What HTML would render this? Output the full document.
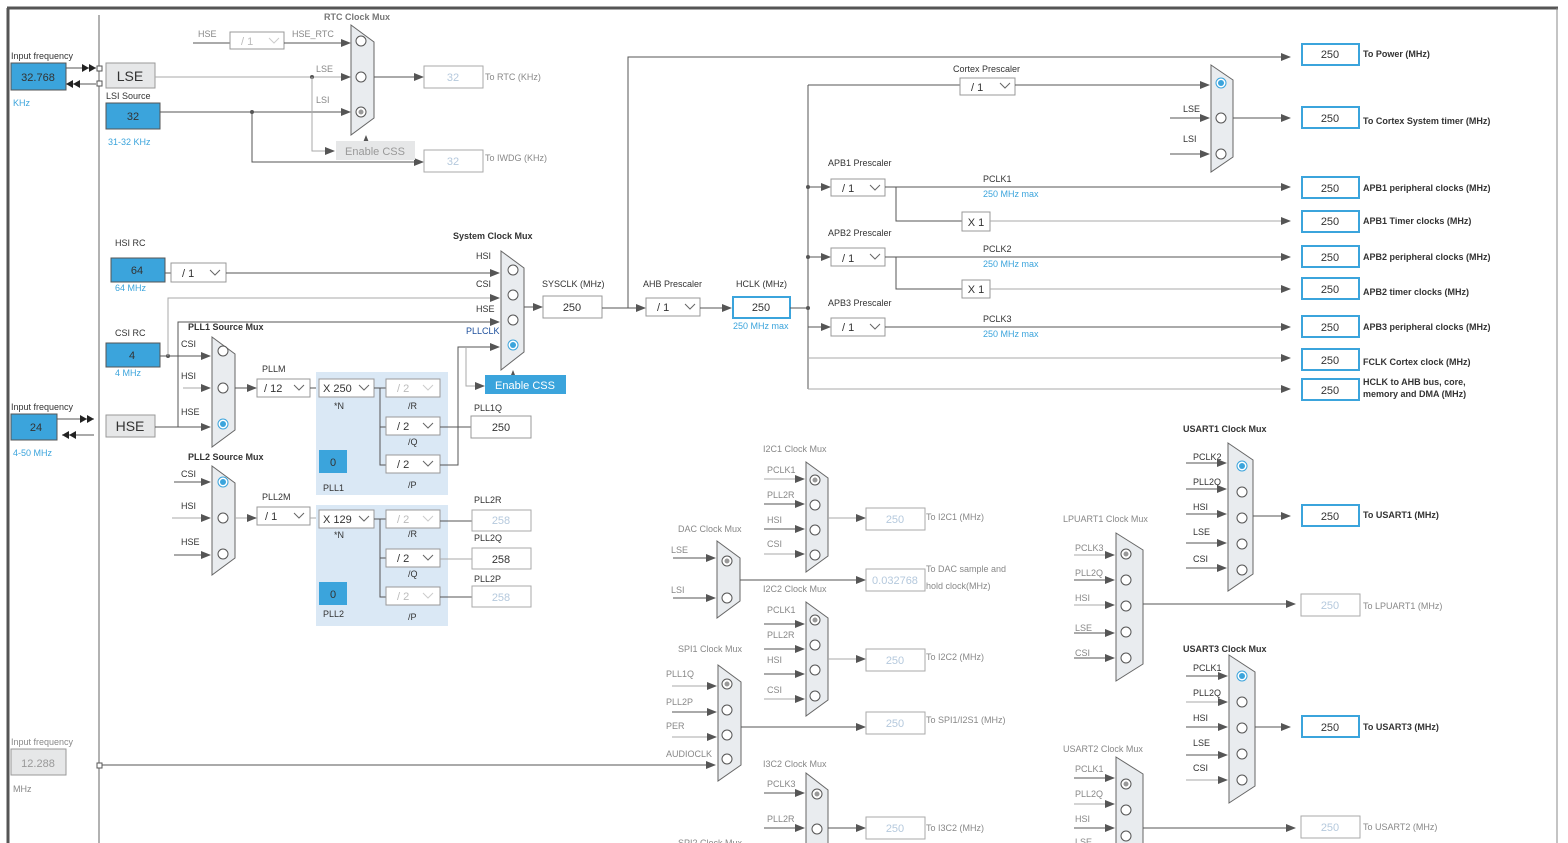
<!DOCTYPE html>
<html><head><meta charset="utf-8"><style>
html,body{margin:0;padding:0;background:#fff;width:1568px;height:843px;overflow:hidden}
svg{display:block;font-family:"Liberation Sans",Arial,sans-serif}
.l{stroke:#555;stroke-width:1;fill:none}
.g{stroke:#aaa;stroke-width:1;fill:none}
.m{fill:#e9ecef;stroke:#666;stroke-width:1}
.c{fill:#fff;stroke:#555;stroke-width:1}
.t{font-size:9px;fill:#333}
.tg{font-size:9px;fill:#888}
.tb{font-size:9px;fill:#333;font-weight:bold}
.tbg{font-size:9px;fill:#777;font-weight:bold}
.bl{font-size:9px;fill:#3ba4dc}
.dd{fill:#fff;stroke:#999}
.dt{font-size:11px;fill:#333}
.dtg{font-size:11px;fill:#bbb}
.ob{fill:#fff;stroke:#3ba4dc;stroke-width:2}
.og{fill:#fff;stroke:#aaa;stroke-width:1}
.ot{font-size:11px;fill:#333;text-anchor:middle}
.otg{font-size:11px;fill:#b5c9dd;text-anchor:middle}
.bx{fill:#3ba4dc;stroke:#555}
.ch{stroke:#666;fill:none}
.chg{stroke:#ccc;fill:none}
.rl{font-size:9px;fill:#333;font-weight:bold}
</style></head><body>
<svg width="1568" height="843" viewBox="0 0 1568 843">
<defs>
<marker id="a" markerWidth="10" markerHeight="8" refX="9" refY="4" orient="auto" markerUnits="userSpaceOnUse"><path d="M0,0L10,4L0,8z" fill="#555"/></marker>
</defs>
<line x1="7" y1="8" x2="1558" y2="8" stroke="#555" stroke-width="3"/>
<line x1="8" y1="8" x2="8" y2="843" stroke="#555" stroke-width="3"/>
<line x1="1557" y1="8" x2="1557" y2="843" stroke="#888" stroke-width="1"/>
<line x1="99" y1="15" x2="99" y2="843" stroke="#666"/>

<text x="11" y="59" class="t">Input frequency</text>
<rect x="11" y="63" width="55" height="27" class="bx" stroke="none"/>
<text x="38" y="81" class="ot">32.768</text>
<text x="13" y="106" class="bl">KHz</text>
<line x1="66" y1="68" x2="96" y2="68" class="l"/><path d="M82,64L89,68L82,72zM89,64L96,68L89,72z" fill="#222"/>
<line x1="96" y1="84" x2="66" y2="84" class="l"/><path d="M73,80L66,84L73,88zM80,80L73,84L80,88z" fill="#222"/>
<rect x="97" y="66" width="5" height="5" fill="#fff" stroke="#555"/>
<rect x="97" y="81" width="5" height="5" fill="#fff" stroke="#555"/>
<rect x="106" y="63" width="49" height="25" fill="#e6e7e8" stroke="#999"/>
<text x="130" y="81" font-size="14" fill="#333" text-anchor="middle">LSE</text>
<text x="106" y="99" class="t">LSI Source</text>
<rect x="106" y="103" width="54" height="26" class="bx"/>
<text x="133" y="120" class="ot">32</text>
<text x="108" y="145" class="bl">31-32 KHz</text>

<text x="324" y="20" class="tbg">RTC Clock Mux</text>
<text x="198" y="37" class="tg">HSE</text>
<line x1="193" y1="43" x2="230" y2="43" class="l"/>
<rect x="230" y="32" width="54" height="17" class="dd"/><text x="241" y="45" class="dtg">/ 1</text><polyline points="269,38 274,43 279,38" class="chg"/>
<text x="292" y="37" class="tg">HSE_RTC</text>
<line x1="284" y1="43" x2="350" y2="43" class="l" marker-end="url(#a)"/>
<text x="316" y="72" class="tg">LSE</text>
<text x="316" y="103" class="tg">LSI</text>
<line x1="155" y1="77" x2="350" y2="77" class="g" marker-end="url(#a)"/>
<circle cx="312" cy="77" r="2" fill="#555"/>
<line x1="160" y1="112" x2="350" y2="112" class="l" marker-end="url(#a)"/>
<circle cx="252" cy="112" r="2" fill="#555"/>
<polyline points="312,77 312,151 334,151" class="g" marker-end="url(#a)"/>
<polyline points="252,112 252,162 423,162" class="l" marker-end="url(#a)"/>
<polygon points="351,25 374,42 374,118 351,135" class="m"/>
<circle cx="361" cy="41" r="5" class="c"/><circle cx="361" cy="77" r="5" class="c"/><circle cx="361" cy="112" r="5" class="c"/><circle cx="361" cy="112" r="2.5" fill="#999"/>
<line x1="366" y1="141" x2="366" y2="136" class="l" marker-end="url(#a)"/>
<rect x="336" y="141" width="79" height="19" fill="#e6e7e8"/>
<text x="375" y="155" font-size="11" fill="#999" text-anchor="middle">Enable CSS</text>
<line x1="374" y1="77" x2="423" y2="77" class="l" marker-end="url(#a)"/>
<rect x="424" y="66" width="59" height="22" class="og"/><text x="453" y="81" class="otg">32</text>
<text x="485" y="80" class="tg">To RTC (KHz)</text>
<rect x="424" y="150" width="59" height="22" class="og"/><text x="453" y="165" class="otg">32</text>
<text x="485" y="161" class="tg">To IWDG (KHz)</text>

<text x="115" y="246" class="t">HSI RC</text>
<rect x="111" y="258" width="54" height="24" class="bx"/><text x="137" y="274" class="ot">64</text>
<text x="115" y="291" class="bl">64 MHz</text>
<line x1="165" y1="273" x2="171" y2="273" class="l"/>
<rect x="171" y="263" width="55" height="19" class="dd"/><text x="182" y="277" class="dt">/ 1</text><polyline points="210,270 215,275 220,270" class="ch"/>
<line x1="226" y1="273" x2="499" y2="273" class="l" marker-end="url(#a)"/>
<text x="115" y="336" class="t">CSI RC</text>
<rect x="106" y="343" width="54" height="24" class="bx"/><text x="132" y="359" class="ot">4</text>
<text x="115" y="376" class="bl">4 MHz</text>
<line x1="160" y1="356" x2="168" y2="356" class="l"/>
<circle cx="168" cy="356" r="2" fill="#555"/>
<polyline points="168,356 168,298 499,298" class="g" marker-end="url(#a)"/>
<line x1="168" y1="356" x2="210" y2="356" class="l" marker-end="url(#a)"/>
<text x="11" y="410" class="t">Input frequency</text>
<rect x="11" y="414" width="46" height="26" class="bx" stroke="none"/><text x="36" y="431" class="ot">24</text>
<line x1="57" y1="419" x2="94" y2="419" class="l"/><path d="M80,415L87,419L80,423zM87,415L94,419L87,423z" fill="#222"/>
<line x1="94" y1="435" x2="62" y2="435" class="l"/><path d="M69,431L62,435L69,439zM76,431L69,435L76,439z" fill="#222"/>
<text x="13" y="456" class="bl">4-50 MHz</text>
<rect x="106" y="415" width="49" height="22" fill="#e6e7e8" stroke="#999"/>
<text x="130" y="431" font-size="14" fill="#333" text-anchor="middle">HSE</text>
<line x1="155" y1="427" x2="210" y2="427" class="l" marker-end="url(#a)"/>
<polyline points="178,427 178,322 499,322" class="l" marker-end="url(#a)"/>
<line x1="183" y1="388" x2="210" y2="388" class="g" marker-end="url(#a)"/>

<text x="188" y="330" class="tb">PLL1 Source Mux</text>
<text x="181" y="347" class="t">CSI</text><text x="181" y="379" class="t">HSI</text><text x="181" y="415" class="t">HSE</text>
<polygon points="212,337 235,354 235,430 212,447" class="m"/>
<circle cx="223" cy="351" r="5" class="c"/><circle cx="223" cy="388" r="5" class="c"/>
<circle cx="223" cy="424" r="5" fill="#fff" stroke="#3ba4dc"/><circle cx="223" cy="424" r="3" fill="#3ba4dc"/>
<line x1="235" y1="388" x2="256" y2="388" class="l" marker-end="url(#a)"/>
<text x="262" y="372" class="t">PLLM</text>
<rect x="257" y="379" width="53" height="18" class="dd"/><text x="264" y="392" class="dt">/ 12</text><polyline points="294,385 299,390 304,385" class="ch"/>
<line x1="310" y1="388" x2="319" y2="388" class="l"/>
<rect x="316" y="372" width="132" height="123" fill="#dae8f5"/>
<rect x="319" y="379" width="55" height="18" class="dd"/><text x="323" y="392" class="dt">X 250</text><polyline points="359,385 364,390 369,385" class="ch"/>
<text x="334" y="409" class="t">*N</text>
<polyline points="374,388 386,388" class="l"/>
<polyline points="380,388 380,465 386,465" class="l"/><line x1="380" y1="427" x2="386" y2="427" class="l"/>
<rect x="386" y="379" width="54" height="18" class="dd"/><text x="397" y="392" class="dtg">/ 2</text><polyline points="423,385 428,390 433,385" class="chg"/>
<text x="408" y="409" class="t">/R</text>
<rect x="386" y="417" width="54" height="18" class="dd"/><text x="397" y="430" class="dt">/ 2</text><polyline points="423,423 428,428 433,423" class="ch"/>
<text x="408" y="445" class="t">/Q</text>
<rect x="386" y="455" width="54" height="18" class="dd"/><text x="397" y="468" class="dt">/ 2</text><polyline points="423,461 428,466 433,461" class="ch"/>
<text x="408" y="488" class="t">/P</text>
<rect x="319" y="450" width="28" height="23" fill="#3ba4dc"/><text x="333" y="466" class="ot">0</text>
<text x="323" y="491" class="t">PLL1</text>
<line x1="440" y1="427" x2="471" y2="427" class="l"/>
<polyline points="440,465 458,465 458,347 499,347" class="l" marker-end="url(#a)"/>
<polyline points="466,347 466,386 484,386" class="g" marker-end="url(#a)"/>
<text x="474" y="411" class="t">PLL1Q</text>
<rect x="471" y="416" width="60" height="22" fill="#fff" stroke="#999"/><text x="501" y="431" class="ot">250</text>

<text x="453" y="239" class="tb">System Clock Mux</text>
<text x="476" y="259" class="t">HSI</text><text x="476" y="287" class="t">CSI</text><text x="476" y="312" class="t">HSE</text>
<text x="466" y="334" font-size="9" fill="#1c4f9c">PLLCLK</text>
<polygon points="501,251 524,268 524,352 501,370" class="m"/>
<circle cx="513" cy="270" r="5" class="c"/><circle cx="513" cy="295" r="5" class="c"/><circle cx="513" cy="320" r="5" class="c"/>
<circle cx="513" cy="345" r="5" fill="#fff" stroke="#3ba4dc"/><circle cx="513" cy="345" r="3" fill="#3ba4dc"/>
<line x1="513" y1="376" x2="513" y2="371" class="l" marker-end="url(#a)"/>
<rect x="485" y="375" width="81" height="19" fill="#3ba4dc"/>
<text x="525" y="389" font-size="11" fill="#fff" text-anchor="middle">Enable CSS</text>
<line x1="524" y1="307" x2="542" y2="307" class="l" marker-end="url(#a)"/>
<text x="542" y="287" class="t">SYSCLK (MHz)</text>
<rect x="543" y="296" width="59" height="22" fill="#fff" stroke="#999"/><text x="572" y="311" class="ot">250</text>
<line x1="602" y1="308" x2="645" y2="308" class="l" marker-end="url(#a)"/>
<polyline points="628,308 628,57 1290,57" class="l" marker-end="url(#a)"/>
<text x="643" y="287" class="t">AHB Prescaler</text>
<rect x="646" y="298" width="54" height="18" class="dd"/><text x="657" y="311" class="dt">/ 1</text><polyline points="685,304 690,309 695,304" class="ch"/>
<line x1="700" y1="308" x2="731" y2="308" class="l" marker-end="url(#a)"/>
<text x="736" y="287" class="t">HCLK (MHz)</text>
<rect x="733" y="297" width="57" height="21" class="ob"/><text x="761" y="311" class="ot">250</text>
<text x="733" y="329" class="bl">250 MHz max</text>
<line x1="790" y1="308" x2="808" y2="308" class="l"/>
<circle cx="808" cy="308" r="2" fill="#555"/>
<line x1="808" y1="85" x2="808" y2="389" class="l"/>

<text x="953" y="72" class="t">Cortex Prescaler</text>
<line x1="808" y1="85" x2="960" y2="85" class="l"/>
<rect x="960" y="78" width="55" height="17" class="dd"/><text x="971" y="91" class="dt">/ 1</text><polyline points="1000,83 1005,88 1010,83" class="ch"/>
<line x1="1015" y1="85" x2="1209" y2="85" class="l" marker-end="url(#a)"/>
<text x="1183" y="112" class="t">LSE</text><text x="1183" y="142" class="t">LSI</text>
<line x1="1170" y1="118" x2="1209" y2="118" class="l" marker-end="url(#a)"/>
<line x1="1170" y1="154" x2="1209" y2="154" class="l" marker-end="url(#a)"/>
<polygon points="1211,65 1233,80 1233,157 1211,172" class="m"/>
<circle cx="1221" cy="83" r="5" fill="#fff" stroke="#3ba4dc"/><circle cx="1221" cy="83" r="3" fill="#3ba4dc"/>
<circle cx="1221" cy="118" r="5" class="c"/><circle cx="1221" cy="154" r="5" class="c"/>
<line x1="1233" y1="118" x2="1290" y2="118" class="l" marker-end="url(#a)"/>

<text x="828" y="166" class="t">APB1 Prescaler</text>
<circle cx="808" cy="187" r="2" fill="#555"/><line x1="808" y1="187" x2="830" y2="187" class="l" marker-end="url(#a)"/>
<rect x="831" y="179" width="54" height="17" class="dd"/><text x="842" y="192" class="dt">/ 1</text><polyline points="870,185 875,190 880,185" class="ch"/>
<line x1="885" y1="187" x2="1290" y2="187" class="l" marker-end="url(#a)"/>
<text x="983" y="182" class="t">PCLK1</text><text x="983" y="197" class="bl">250 MHz max</text>
<polyline points="896,187 896,221 962,221" class="l"/>
<rect x="962" y="212" width="28" height="19" fill="#fff" stroke="#999"/><text x="976" y="226" class="ot">X 1</text>
<line x1="990" y1="221" x2="1290" y2="221" class="g" marker-end="url(#a)"/>
<text x="828" y="236" class="t">APB2 Prescaler</text>
<circle cx="808" cy="257" r="2" fill="#555"/><line x1="808" y1="257" x2="830" y2="257" class="l" marker-end="url(#a)"/>
<rect x="831" y="248" width="54" height="18" class="dd"/><text x="842" y="262" class="dt">/ 1</text><polyline points="870,254 875,259 880,254" class="ch"/>
<line x1="885" y1="257" x2="1290" y2="257" class="l" marker-end="url(#a)"/>
<text x="983" y="252" class="t">PCLK2</text><text x="983" y="267" class="bl">250 MHz max</text>
<polyline points="896,257 896,289 962,289" class="l"/>
<rect x="962" y="280" width="28" height="18" fill="#fff" stroke="#999"/><text x="976" y="293" class="ot">X 1</text>
<line x1="990" y1="289" x2="1290" y2="289" class="g" marker-end="url(#a)"/>
<text x="828" y="306" class="t">APB3 Prescaler</text>
<line x1="808" y1="327" x2="830" y2="327" class="l" marker-end="url(#a)"/>
<rect x="831" y="318" width="54" height="18" class="dd"/><text x="842" y="331" class="dt">/ 1</text><polyline points="870,324 875,329 880,324" class="ch"/>
<line x1="885" y1="327" x2="1290" y2="327" class="l" marker-end="url(#a)"/>
<text x="983" y="322" class="t">PCLK3</text><text x="983" y="337" class="bl">250 MHz max</text>
<line x1="808" y1="358" x2="1290" y2="358" class="g" marker-end="url(#a)"/>
<line x1="808" y1="389" x2="1290" y2="389" class="g" marker-end="url(#a)"/>

<rect x="1302" y="44" width="57" height="21" class="ob"/><text x="1330" y="58" class="ot">250</text><text x="1363" y="57" class="rl">To Power (MHz)</text>
<rect x="1302" y="107" width="57" height="21" class="ob"/><text x="1330" y="122" class="ot">250</text><text x="1363" y="124" class="rl">To Cortex System timer (MHz)</text>
<rect x="1302" y="177" width="57" height="21" class="ob"/><text x="1330" y="192" class="ot">250</text><text x="1363" y="191" class="rl">APB1 peripheral clocks (MHz)</text>
<rect x="1302" y="211" width="57" height="21" class="ob"/><text x="1330" y="225" class="ot">250</text><text x="1363" y="224" class="rl">APB1 Timer clocks (MHz)</text>
<rect x="1302" y="246" width="57" height="21" class="ob"/><text x="1330" y="261" class="ot">250</text><text x="1363" y="260" class="rl">APB2 peripheral clocks (MHz)</text>
<rect x="1302" y="278" width="57" height="21" class="ob"/><text x="1330" y="293" class="ot">250</text><text x="1363" y="295" class="rl">APB2 timer clocks (MHz)</text>
<rect x="1302" y="316" width="57" height="21" class="ob"/><text x="1330" y="331" class="ot">250</text><text x="1363" y="330" class="rl">APB3 peripheral clocks (MHz)</text>
<rect x="1302" y="349" width="57" height="21" class="ob"/><text x="1330" y="364" class="ot">250</text><text x="1363" y="365" class="rl">FCLK Cortex clock (MHz)</text>
<rect x="1302" y="379" width="57" height="21" class="ob"/><text x="1330" y="394" class="ot">250</text><text x="1363" y="385" class="rl">HCLK to AHB bus, core,</text><text x="1363" y="397" class="rl">memory and DMA (MHz)</text>

<text x="188" y="460" class="tb">PLL2 Source Mux</text>
<text x="181" y="477" class="t">CSI</text><text x="181" y="509" class="t">HSI</text><text x="181" y="545" class="t">HSE</text>
<line x1="174" y1="482" x2="210" y2="482" class="l" marker-end="url(#a)"/>
<line x1="172" y1="518" x2="210" y2="518" class="g" marker-end="url(#a)"/>
<line x1="174" y1="555" x2="210" y2="555" class="l" marker-end="url(#a)"/>
<polygon points="212,466 235,483 235,558 212,575" class="m"/>
<circle cx="223" cy="482" r="5" fill="#fff" stroke="#3ba4dc"/><circle cx="223" cy="482" r="3" fill="#3ba4dc"/>
<circle cx="223" cy="518" r="5" class="c"/><circle cx="223" cy="554" r="5" class="c"/>
<line x1="235" y1="518" x2="256" y2="518" class="g" marker-end="url(#a)"/>
<text x="262" y="500" class="t">PLL2M</text>
<rect x="257" y="507" width="53" height="18" class="dd"/><text x="265" y="520" class="dt">/ 1</text><polyline points="294,513 299,518 304,513" class="ch"/>
<line x1="310" y1="518" x2="319" y2="518" class="g"/>
<rect x="316" y="505" width="132" height="121" fill="#dae8f5"/>
<rect x="319" y="510" width="55" height="18" class="dd"/><text x="323" y="523" class="dt">X 129</text><polyline points="359,516 364,521 369,516" class="ch"/>
<text x="334" y="538" class="t">*N</text>
<line x1="374" y1="519" x2="386" y2="519" class="l"/>
<polyline points="380,519 380,597 386,597" class="l"/><line x1="380" y1="558" x2="386" y2="558" class="l"/>
<rect x="386" y="510" width="54" height="18" class="dd"/><text x="397" y="523" class="dtg">/ 2</text><polyline points="423,516 428,521 433,516" class="chg"/>
<text x="408" y="537" class="t">/R</text>
<rect x="386" y="549" width="54" height="18" class="dd"/><text x="397" y="562" class="dt">/ 2</text><polyline points="423,555 428,560 433,555" class="ch"/>
<text x="408" y="577" class="t">/Q</text>
<rect x="386" y="587" width="54" height="18" class="dd"/><text x="397" y="600" class="dtg">/ 2</text><polyline points="423,593 428,598 433,593" class="chg"/>
<text x="408" y="620" class="t">/P</text>
<rect x="319" y="582" width="28" height="23" fill="#3ba4dc"/><text x="333" y="598" class="ot">0</text>
<text x="323" y="617" class="t">PLL2</text>
<line x1="440" y1="521" x2="472" y2="521" class="l"/><line x1="440" y1="559" x2="472" y2="559" class="g"/><line x1="440" y1="597" x2="472" y2="597" class="l"/>
<text x="474" y="503" class="t">PLL2R</text><rect x="472" y="510" width="59" height="21" class="og" stroke="#999"/><text x="501" y="524" class="otg">258</text>
<text x="474" y="541" class="t">PLL2Q</text><rect x="472" y="548" width="59" height="21" class="og" stroke="#999"/><text x="501" y="563" class="ot">258</text>
<text x="474" y="582" class="t">PLL2P</text><rect x="472" y="586" width="59" height="21" class="og" stroke="#999"/><text x="501" y="601" class="otg">258</text>

<text x="11" y="745" class="tg">Input frequency</text>
<rect x="11" y="749" width="55" height="26" fill="#e6e7e8" stroke="#999"/><text x="38" y="767" font-size="11" fill="#999" text-anchor="middle">12.288</text>
<text x="13" y="792" class="tg">MHz</text>
<rect x="97" y="763" width="5" height="5" fill="#fff" stroke="#555"/>
<line x1="102" y1="765" x2="715" y2="765" class="l" marker-end="url(#a)"/>

<g class="tg">
<text x="678" y="532">DAC Clock Mux</text>
<text x="671" y="553">LSE</text><text x="671" y="593">LSI</text>
</g>
<line x1="673" y1="558" x2="715" y2="558" class="l" marker-end="url(#a)"/>
<line x1="673" y1="598" x2="715" y2="598" class="l" marker-end="url(#a)"/>
<polygon points="717,541 740,558 740,601 717,618" class="m"/>
<circle cx="727" cy="561" r="5" class="c"/><circle cx="727" cy="561" r="2.5" fill="#999"/><circle cx="727" cy="598" r="5" class="c"/>
<line x1="740" y1="580" x2="865" y2="580" class="l" marker-end="url(#a)"/>
<rect x="866" y="569" width="59" height="22" class="og"/><text x="895" y="584" class="otg" font-size="10">0.032768</text>
<text x="926" y="572" class="tg">To DAC sample and</text><text x="926" y="589" class="tg">hold clock(MHz)</text>

<g class="tg">
<text x="763" y="452">I2C1 Clock Mux</text>
<text x="767" y="473">PCLK1</text><text x="767" y="498">PLL2R</text><text x="767" y="523">HSI</text><text x="767" y="547">CSI</text>
</g>
<line x1="764" y1="479" x2="804" y2="479" class="g" marker-end="url(#a)"/>
<line x1="764" y1="504" x2="804" y2="504" class="l" marker-end="url(#a)"/>
<line x1="764" y1="529" x2="804" y2="529" class="l" marker-end="url(#a)"/>
<line x1="764" y1="554" x2="804" y2="554" class="g" marker-end="url(#a)"/>
<polygon points="806,462 828,478 828,556 806,572" class="m"/>
<circle cx="815" cy="480" r="5" class="c"/><circle cx="815" cy="480" r="2.5" fill="#999"/><circle cx="815" cy="505" r="5" class="c"/><circle cx="815" cy="530" r="5" class="c"/><circle cx="815" cy="555" r="5" class="c"/>
<line x1="828" y1="518" x2="865" y2="518" class="g" marker-end="url(#a)"/>
<rect x="866" y="508" width="59" height="22" class="og"/><text x="895" y="523" class="otg">250</text>
<text x="926" y="520" class="tg">To I2C1 (MHz)</text>

<g class="tg">
<text x="763" y="592">I2C2 Clock Mux</text>
<text x="767" y="613">PCLK1</text><text x="767" y="638">PLL2R</text><text x="767" y="663">HSI</text><text x="767" y="693">CSI</text>
</g>
<line x1="764" y1="624" x2="804" y2="624" class="l" marker-end="url(#a)"/>
<line x1="764" y1="649" x2="804" y2="649" class="l" marker-end="url(#a)"/>
<line x1="764" y1="674" x2="804" y2="674" class="l" marker-end="url(#a)"/>
<line x1="764" y1="699" x2="804" y2="699" class="g" marker-end="url(#a)"/>
<polygon points="806,602 828,618 828,700 806,716" class="m"/>
<circle cx="815" cy="620" r="5" class="c"/><circle cx="815" cy="620" r="2.5" fill="#999"/><circle cx="815" cy="645" r="5" class="c"/><circle cx="815" cy="670" r="5" class="c"/><circle cx="815" cy="696" r="5" class="c"/>
<line x1="828" y1="659" x2="865" y2="659" class="g" marker-end="url(#a)"/>
<rect x="866" y="649" width="59" height="22" class="og"/><text x="895" y="664" class="otg">250</text>
<text x="926" y="660" class="tg">To I2C2 (MHz)</text>

<g class="tg">
<text x="678" y="652">SPI1 Clock Mux</text>
<text x="666" y="677">PLL1Q</text><text x="666" y="705">PLL2P</text><text x="666" y="729">PER</text><text x="666" y="757">AUDIOCLK</text>
</g>
<line x1="672" y1="686" x2="716" y2="686" class="g" marker-end="url(#a)"/>
<line x1="672" y1="712" x2="716" y2="712" class="l" marker-end="url(#a)"/>
<line x1="672" y1="737" x2="716" y2="737" class="g" marker-end="url(#a)"/>
<polygon points="718,665 741,682 741,765 718,781" class="m"/>
<circle cx="727" cy="684" r="5" class="c"/><circle cx="727" cy="684" r="2.5" fill="#999"/><circle cx="727" cy="710" r="5" class="c"/><circle cx="727" cy="735" r="5" class="c"/><circle cx="727" cy="759" r="5" class="c"/>
<line x1="741" y1="727" x2="865" y2="727" class="l" marker-end="url(#a)"/>
<rect x="866" y="712" width="59" height="22" class="og"/><text x="895" y="727" class="otg">250</text>
<text x="926" y="723" class="tg">To SPI1/I2S1 (MHz)</text>

<g class="tg">
<text x="763" y="767">I3C2 Clock Mux</text>
<text x="767" y="787">PCLK3</text><text x="767" y="822">PLL2R</text>
<text x="678" y="846">SPI2 Clock Mux</text>
</g>
<line x1="764" y1="793" x2="804" y2="793" class="l" marker-end="url(#a)"/>
<line x1="764" y1="828" x2="804" y2="828" class="l" marker-end="url(#a)"/>
<polygon points="806,773 828,790 828,850 806,850" class="m"/>
<circle cx="817" cy="794" r="5" class="c"/><circle cx="817" cy="794" r="2.5" fill="#999"/><circle cx="817" cy="829" r="5" class="c"/>
<line x1="828" y1="828" x2="865" y2="828" class="l" marker-end="url(#a)"/>
<rect x="866" y="817" width="59" height="22" class="og"/><text x="895" y="832" class="otg">250</text>
<text x="926" y="831" class="tg">To I3C2 (MHz)</text>

<g class="tg">
<text x="1063" y="522">LPUART1 Clock Mux</text>
<text x="1075" y="551">PCLK3</text><text x="1075" y="576">PLL2Q</text><text x="1075" y="601">HSI</text><text x="1075" y="631">LSE</text><text x="1075" y="656">CSI</text>
</g>
<line x1="1074" y1="555" x2="1114" y2="555" class="g" marker-end="url(#a)"/>
<line x1="1074" y1="580" x2="1114" y2="580" class="l" marker-end="url(#a)"/>
<line x1="1074" y1="605" x2="1114" y2="605" class="g" marker-end="url(#a)"/>
<line x1="1074" y1="633" x2="1114" y2="633" class="l" marker-end="url(#a)"/>
<line x1="1074" y1="658" x2="1114" y2="658" class="l" marker-end="url(#a)"/>
<polygon points="1116,533 1143,550 1143,664 1116,681" class="m"/>
<circle cx="1126" cy="554" r="5" class="c"/><circle cx="1126" cy="554" r="2.5" fill="#999"/><circle cx="1126" cy="580" r="5" class="c"/><circle cx="1126" cy="606" r="5" class="c"/><circle cx="1126" cy="632" r="5" class="c"/><circle cx="1126" cy="658" r="5" class="c"/>
<line x1="1143" y1="604" x2="1295" y2="604" class="l" marker-end="url(#a)"/>
<rect x="1301" y="594" width="59" height="22" class="og"/><text x="1330" y="609" class="otg">250</text>
<text x="1363" y="609" class="tg">To LPUART1 (MHz)</text>

<text x="1183" y="432" class="tb" fill="#444">USART1 Clock Mux</text>
<g class="t">
<text x="1193" y="460">PCLK2</text><text x="1193" y="485">PLL2Q</text><text x="1193" y="510">HSI</text><text x="1193" y="535">LSE</text><text x="1193" y="562">CSI</text>
</g>
<line x1="1186" y1="463" x2="1226" y2="463" class="l" marker-end="url(#a)"/>
<line x1="1186" y1="489" x2="1226" y2="489" class="l" marker-end="url(#a)"/>
<line x1="1186" y1="514" x2="1226" y2="514" class="l" marker-end="url(#a)"/>
<line x1="1186" y1="543" x2="1226" y2="543" class="l" marker-end="url(#a)"/>
<line x1="1186" y1="568" x2="1226" y2="568" class="l" marker-end="url(#a)"/>
<polygon points="1228,443 1253,460 1253,574 1228,591" class="m"/>
<circle cx="1242" cy="466" r="5" fill="#fff" stroke="#3ba4dc"/><circle cx="1242" cy="466" r="3" fill="#3ba4dc"/>
<circle cx="1242" cy="492" r="5" class="c"/><circle cx="1242" cy="518" r="5" class="c"/><circle cx="1242" cy="544" r="5" class="c"/><circle cx="1242" cy="570" r="5" class="c"/>
<line x1="1253" y1="516" x2="1290" y2="516" class="l" marker-end="url(#a)"/>
<rect x="1302" y="505" width="57" height="21" class="ob"/><text x="1330" y="520" class="ot">250</text>
<text x="1363" y="518" class="rl">To USART1 (MHz)</text>

<text x="1183" y="652" class="tb" fill="#444">USART3 Clock Mux</text>
<g class="t">
<text x="1193" y="671">PCLK1</text><text x="1193" y="696">PLL2Q</text><text x="1193" y="721">HSI</text><text x="1193" y="746">LSE</text><text x="1193" y="771">CSI</text>
</g>
<line x1="1186" y1="676" x2="1227" y2="676" class="l" marker-end="url(#a)"/>
<line x1="1186" y1="702" x2="1227" y2="702" class="g" marker-end="url(#a)"/>
<line x1="1186" y1="727" x2="1227" y2="727" class="l" marker-end="url(#a)"/>
<line x1="1186" y1="755" x2="1227" y2="755" class="l" marker-end="url(#a)"/>
<line x1="1186" y1="780" x2="1227" y2="780" class="g" marker-end="url(#a)"/>
<polygon points="1229,655 1255,672 1255,786 1229,803" class="m"/>
<circle cx="1242" cy="676" r="5" fill="#fff" stroke="#3ba4dc"/><circle cx="1242" cy="676" r="3" fill="#3ba4dc"/>
<circle cx="1242" cy="702" r="5" class="c"/><circle cx="1242" cy="728" r="5" class="c"/><circle cx="1242" cy="754" r="5" class="c"/><circle cx="1242" cy="780" r="5" class="c"/>
<line x1="1255" y1="727" x2="1290" y2="727" class="l" marker-end="url(#a)"/>
<rect x="1302" y="716" width="57" height="21" class="ob"/><text x="1330" y="731" class="ot">250</text>
<text x="1363" y="730" class="rl">To USART3 (MHz)</text>

<g class="tg">
<text x="1063" y="752">USART2 Clock Mux</text>
<text x="1075" y="772">PCLK1</text><text x="1075" y="797">PLL2Q</text><text x="1075" y="822">HSI</text><text x="1075" y="845">LSE</text>
</g>
<line x1="1074" y1="778" x2="1114" y2="778" class="l" marker-end="url(#a)"/>
<line x1="1074" y1="804" x2="1114" y2="804" class="g" marker-end="url(#a)"/>
<line x1="1074" y1="828" x2="1114" y2="828" class="l" marker-end="url(#a)"/>
<polygon points="1116,757 1143,774 1143,850 1116,850" class="m"/>
<circle cx="1126" cy="784" r="5" class="c"/><circle cx="1126" cy="784" r="2.5" fill="#999"/><circle cx="1126" cy="810" r="5" class="c"/><circle cx="1126" cy="836" r="5" class="c"/>
<line x1="1143" y1="828" x2="1295" y2="828" class="l" marker-end="url(#a)"/>
<rect x="1301" y="816" width="59" height="22" class="og"/><text x="1330" y="831" class="otg">250</text>
<text x="1363" y="830" class="tg">To USART2 (MHz)</text>
</svg>
</body></html>
